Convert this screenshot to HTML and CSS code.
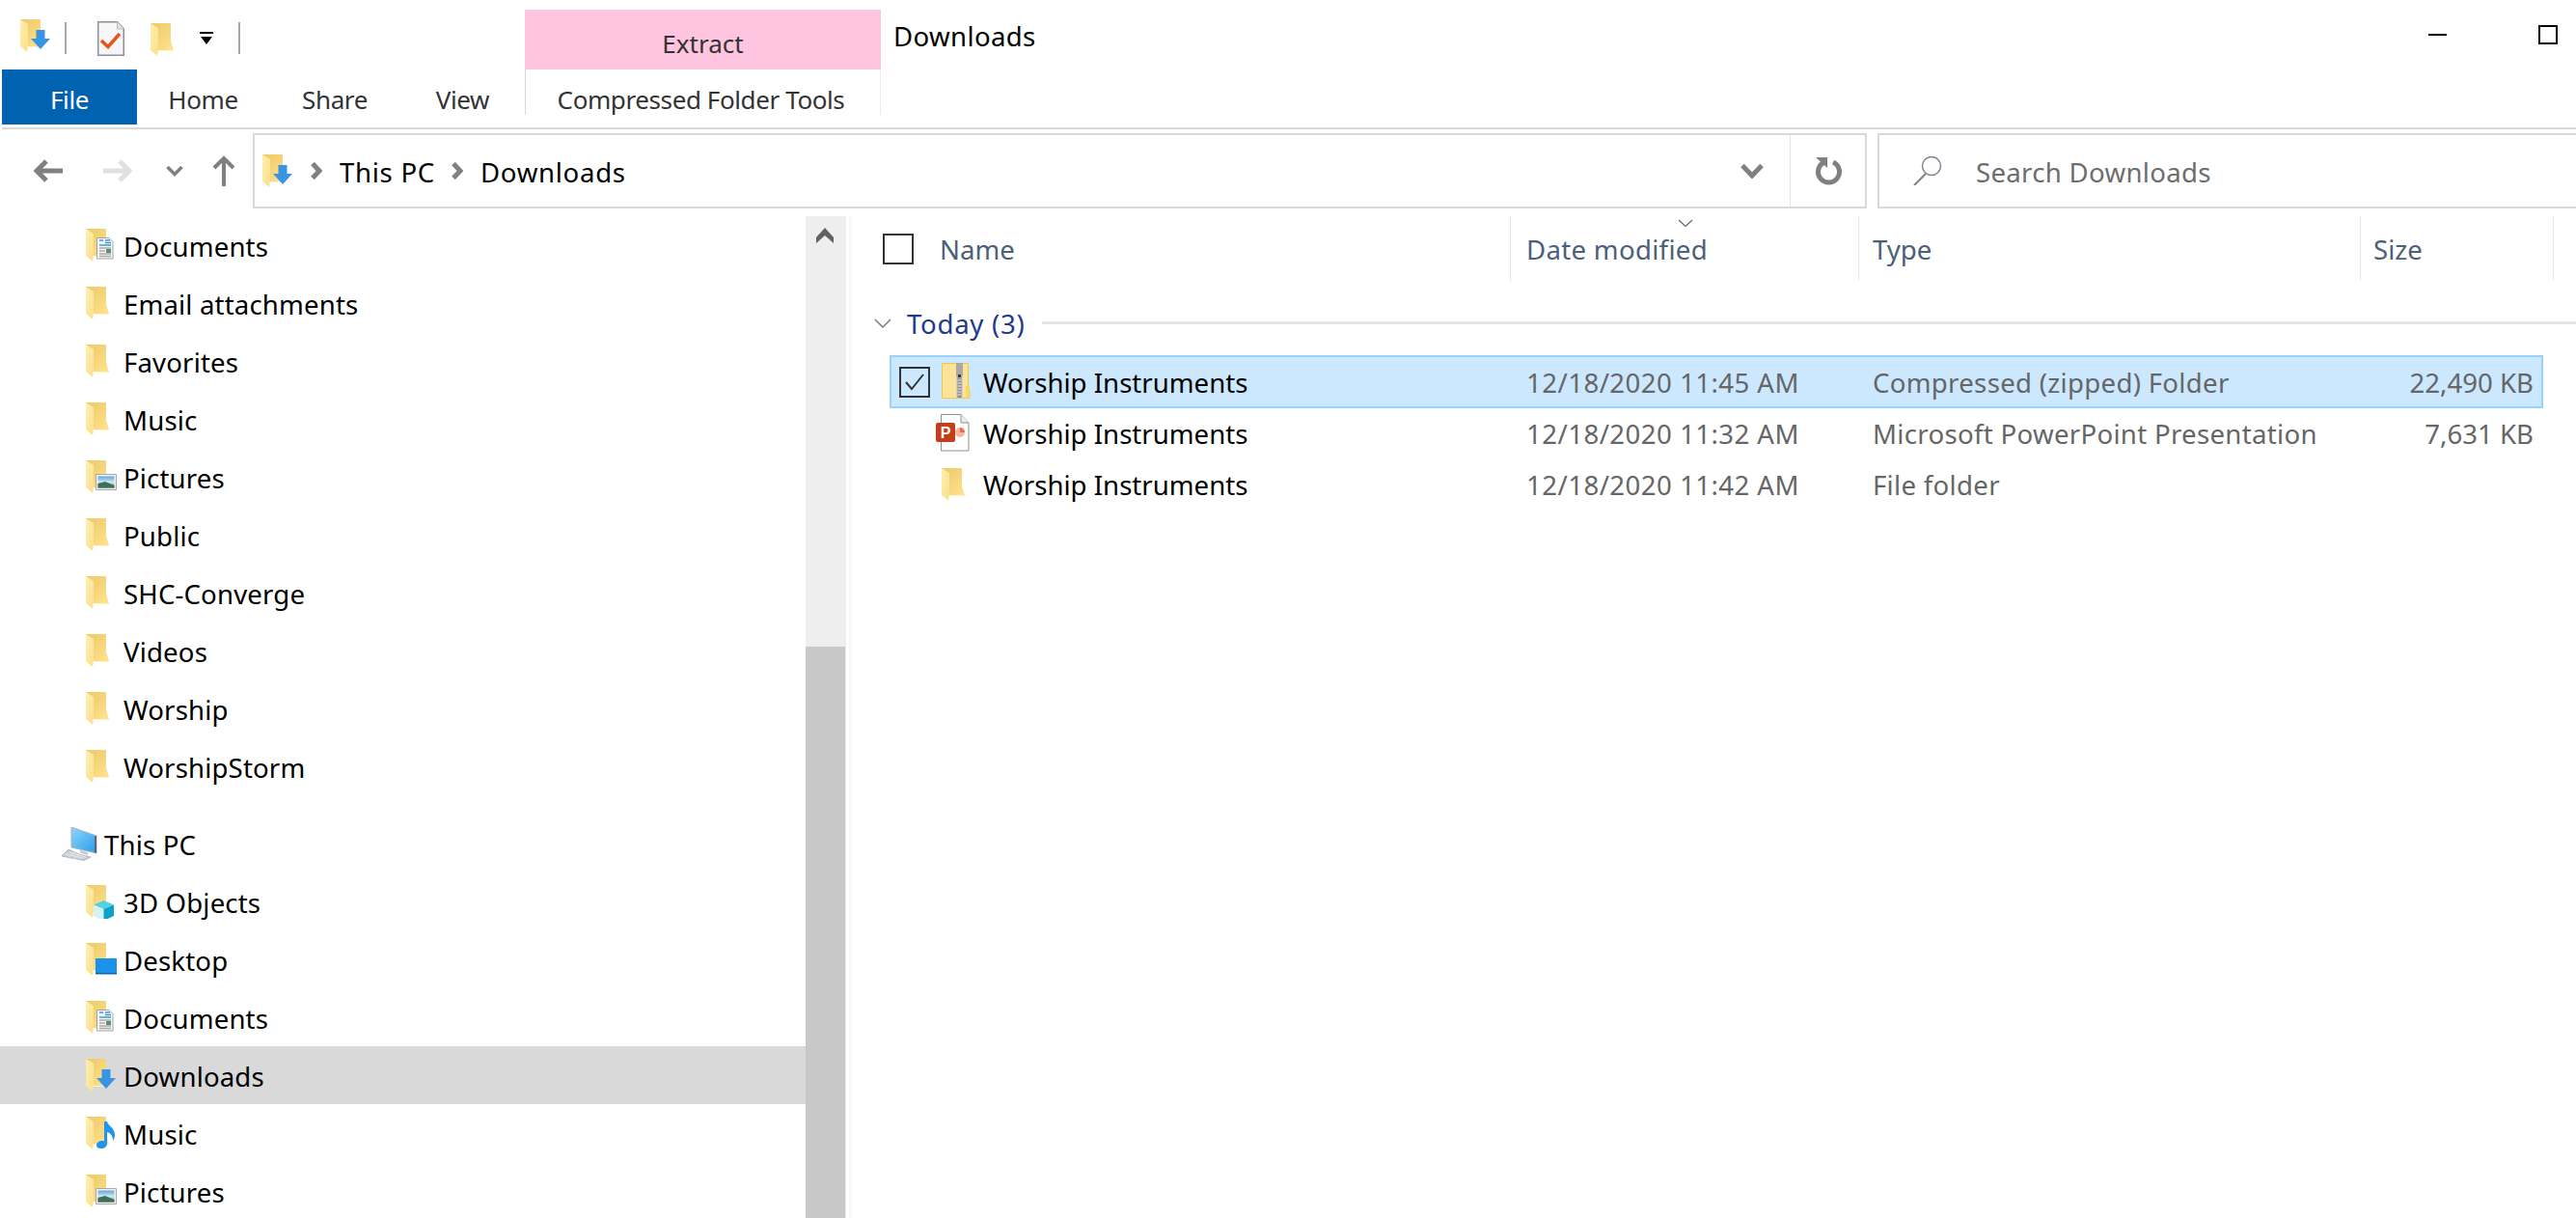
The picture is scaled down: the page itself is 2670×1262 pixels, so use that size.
FILE: index.html
```html
<!DOCTYPE html>
<html lang="en">
<head>
    <meta charset="UTF-8">
    <title>Downloads</title>
    <link rel="stylesheet" href="styles.css">
</head>
<body>
    <svg class="sprite" xmlns="http://www.w3.org/2000/svg">
        <defs>
            <linearGradient id="folderBack" x1="0" y1="0" x2="1" y2="1">
                <stop offset="0" stop-color="#edc866"/>
                <stop offset="1" stop-color="#ffe38f"/>
            </linearGradient>
            <linearGradient id="folderFlap" x1="0" y1="0" x2="1" y2="1">
                <stop offset="0" stop-color="#ffefae"/>
                <stop offset="1" stop-color="#fbdf8c"/>
            </linearGradient>
            <linearGradient id="screen" x1="0" y1="0" x2="1" y2="1">
                <stop offset="0" stop-color="#8fd6fb"/>
                <stop offset="1" stop-color="#2a9cea"/>
            </linearGradient>
            <linearGradient id="photo" x1="0" y1="0" x2="0" y2="1">
                <stop offset="0" stop-color="#5aa6e0"/>
                <stop offset="0.5" stop-color="#cfe6f2"/>
                <stop offset="1" stop-color="#5d8f72"/>
            </linearGradient>
            <g id="folderShape">
                <path d="M0 1H21V20L24 29H7Z" fill="url(#folderBack)"/>
                <path d="M0 1L8 6V29L7 35L0 29Z" fill="url(#folderFlap)"/>
                <path d="M7 29H24V30H7Z" fill="#fff3c9"/>
            </g>
        </defs>
        <symbol id="folder" viewBox="0 0 40 36">
            <use href="#folderShape"/>
        </symbol>
        <symbol id="folderDocs" viewBox="0 0 40 36">
            <use href="#folderShape"/>
            <path d="M11.5 10.5H24L28 14.5V32H11.5Z" fill="#f7f7f7" stroke="#a3a3a3"/>
            <path d="M14 13H18M20 13H25M20 15.5H26M14 18H26" stroke="#3b98dc" stroke-width="1.4"/>
            <path d="M14 21H26M14 24H20M14 27H26M14 29.5H26" stroke="#a9a9a9" stroke-width="1.4"/>
            <path d="M21 22H26V26H21Z" fill="#5d8f72"/>
        </symbol>
        <symbol id="folderPics" viewBox="0 0 40 36">
            <use href="#folderShape"/>
            <path d="M10.5 15.5H31.5V31.5H10.5Z" fill="#f2f2f2" stroke="#a8a8a8"/>
            <path d="M12.5 17.5H29.5V29.5H12.5Z" fill="url(#photo)"/>
            <path d="M12.5 25L20 23L29.5 27V29.5H12.5Z" fill="#3f6f58"/>
        </symbol>
        <symbol id="folderDown" viewBox="0 0 40 36">
            <use href="#folderShape"/>
            <path d="M16.500 12H25.500V21H31L21 32L11 21H16.500Z" fill="#3a94e4"/>
        </symbol>
        <symbol id="folder3d" viewBox="0 0 40 36">
            <use href="#folderShape"/>
            <path d="M18.500 17L29 21.500L18.500 26L8 21.500Z" fill="#55d2e2"/>
            <path d="M8 21.500L18.500 26V38L8 33Z" fill="#d4f3f3"/>
            <path d="M18.500 26L29 21.500V33L18.500 38Z" fill="#0ba3c8"/>
        </symbol>
        <symbol id="folderDesktop" viewBox="0 0 40 36">
            <use href="#folderShape"/>
            <path d="M10 17H32V33H10Z" fill="#1a92ea"/>
            <path d="M10 32H32V33.500H10Z" fill="#0b63b0"/>
        </symbol>
        <symbol id="folderMusic" viewBox="0 0 40 36">
            <use href="#folderShape"/>
            <path d="M19 6H22C23 11 30 12 30 20C30 23 29 25 28 26C28.500 22 26 18 22 17V29C22 32 19 34 15.500 34C12.500 34 11 32.500 11 30.500C11 28 14 26 17 26C17.500 26 18.500 26 19 26.500Z" fill="#1f96ee"/>
        </symbol>
        <symbol id="pc" viewBox="0 0 38 36">
            <path d="M11 0L37 9V27L11 21Z" fill="url(#screen)" stroke="#a8b3bb"/>
            <path d="M37 9V27L35 26.500V9.500Z" fill="#5a6670"/>
            <path d="M20 24L28 26V29L20 27Z" fill="#c5cbd0"/>
            <path d="M8 23L20 28.500L31 31L24 34.500L1 30Z" fill="#c9ced2" stroke="#a5acb2" stroke-width="0.800"/>
            <path d="M5 28L23 32M9 26L26 31M8 31L16 24.500M14 32.500L21 26.500" stroke="#eceef0" stroke-width="0.800"/>
        </symbol>
        <symbol id="zip" viewBox="0 0 40 40">
            <path d="M6.500 .5H33.500V22L35 29V36.500H6.500Z" fill="#fde397" stroke="#eec94f"/>
            <path d="M31 24H35V36H31Z" fill="#fcd568"/>
            <path d="M21 0H28V36H21Z" fill="#d4d0c4"/>
            <path d="M22.500 15H26.500V36H22.500Z" fill="#8c8c88"/>
            <path d="M23 18H26M23 21H26M23 24H26M23 27H26M23 30H26M23 33H26" stroke="#f1f1ee" stroke-width="1.200"/>
            <path d="M21 0H28V13L26 16H23L21 13Z" fill="#a9a9a5"/>
            <path d="M23 12H26V15H23Z" fill="#3b3b3b"/>
        </symbol>
    </svg>

    <div class="window">
        <header class="ribbon">
            <div class="title-row">
                <div class="qat">
                    <svg class="icon qat-folder"><use href="#folderDown"/></svg>
                    <span class="qat-sep qat-sep-first"></span>
                    <svg class="qat-doc" viewBox="0 0 28 36">
                        <path d="M.75 .75H20.500L27.250 8V35.250H.75Z" fill="#f5f6f7" stroke="#8f8f8f" stroke-width="1.500"/>
                        <path d="M20.500 .75V8H27.250" fill="#e4e4e4" stroke="#bbb"/>
                        <path d="M4 20L11 26.500L23 13" fill="none" stroke="#e8541c" stroke-width="3.500"/>
                    </svg>
                    <svg class="qat-folder-small"><use href="#folder"/></svg>
                    <svg class="qat-more" viewBox="0 0 14 14">
                        <path d="M0 1H14" stroke="#000" stroke-width="2"/>
                        <path d="M1 5H13L7 13Z" fill="#000"/>
                    </svg>
                    <span class="qat-sep"></span>
                </div>
                <div class="context-label">Extract</div>
                <div class="window-title">Downloads</div>
                <div class="window-buttons">
                    <span class="btn-min"></span>
                    <span class="btn-max"></span>
                </div>
            </div>
            <nav class="tab-row">
                <div class="tab tab-file">File</div>
                <div class="tab tab-home">Home</div>
                <div class="tab tab-share">Share</div>
                <div class="tab tab-view">View</div>
                <div class="tab tab-context">Compressed Folder Tools</div>
            </nav>
        </header>

        <div class="address-row">
            <svg class="nav-btn nav-back" viewBox="0 0 30 24"><path d="M30 12H4M13 2L3 12L13 22" fill="none" stroke="#808080" stroke-width="5"/></svg>
            <svg class="nav-btn nav-forward" viewBox="0 0 30 24"><path d="M0 12H26M17 2L27 12L17 22" fill="none" stroke="#e0e0e0" stroke-width="5"/></svg>
            <svg class="nav-btn nav-recent" viewBox="0 0 18 12"><path d="M1.500 2L9 9.500L16.500 2" fill="none" stroke="#808080" stroke-width="3.500"/></svg>
            <svg class="nav-btn nav-up" viewBox="0 0 24 32"><path d="M12 32V4M2 13L12 3L22 13" fill="none" stroke="#808080" stroke-width="4"/></svg>
            <div class="address-box">
                <svg class="icon"><use href="#folderDown"/></svg>
                <svg class="crumb-arrow" viewBox="0 0 12 18"><path d="M2 1.500L9 9L2 16.500" fill="none" stroke="#808080" stroke-width="5"/></svg>
                <span class="crumb">This PC</span>
                <svg class="crumb-arrow" viewBox="0 0 12 18"><path d="M2 1.500L9 9L2 16.500" fill="none" stroke="#808080" stroke-width="5"/></svg>
                <span class="crumb">Downloads</span>
                <svg class="address-drop" viewBox="0 0 24 16"><path d="M2 2.500L12 13L22 2.500" fill="none" stroke="#808080" stroke-width="5"/></svg>
                <div class="refresh">
                    <svg viewBox="0 0 30 30"><path d="M20 6A11 11 0 1 1 10 6.500" fill="none" stroke="#808080" stroke-width="5"/><path d="M2 1H14V12Z" fill="#808080"/></svg>
                </div>
            </div>
            <div class="search-box">
                <svg class="search-icon" viewBox="0 0 30 30"><circle cx="19" cy="10" r="9.500" fill="none" stroke="#7f8a94" stroke-width="1.500"/><path d="M13 18L1 30" stroke="#808080" stroke-width="2"/></svg>
                <span>Search Downloads</span>
            </div>
        </div>

        <div class="content">
            <aside class="nav-pane">
                <ul class="tree">
                    <li><svg class="icon"><use href="#folderDocs"/></svg>Documents</li>
                    <li><svg class="icon"><use href="#folder"/></svg>Email attachments</li>
                    <li><svg class="icon"><use href="#folder"/></svg>Favorites</li>
                    <li><svg class="icon"><use href="#folder"/></svg>Music</li>
                    <li><svg class="icon"><use href="#folderPics"/></svg>Pictures</li>
                    <li><svg class="icon"><use href="#folder"/></svg>Public</li>
                    <li><svg class="icon"><use href="#folder"/></svg>SHC-Converge</li>
                    <li><svg class="icon"><use href="#folder"/></svg>Videos</li>
                    <li><svg class="icon"><use href="#folder"/></svg>Worship</li>
                    <li><svg class="icon"><use href="#folder"/></svg>WorshipStorm</li>
                </ul>
                <ul class="tree tree-pc">
                    <li class="root"><svg class="icon-pc"><use href="#pc"/></svg>This PC</li>
                    <li><svg class="icon"><use href="#folder3d"/></svg>3D Objects</li>
                    <li><svg class="icon"><use href="#folderDesktop"/></svg>Desktop</li>
                    <li><svg class="icon"><use href="#folderDocs"/></svg>Documents</li>
                    <li class="current"><svg class="icon"><use href="#folderDown"/></svg>Downloads</li>
                    <li><svg class="icon"><use href="#folderMusic"/></svg>Music</li>
                    <li><svg class="icon"><use href="#folderPics"/></svg>Pictures</li>
                </ul>
            </aside>
            <div class="scrollbar">
                <svg class="scroll-up" viewBox="0 0 18 16"><path d="M0 16V10L9 0L18 10V16L9 8Z" fill="#606060"/></svg>
                <div class="scroll-thumb"></div>
            </div>

            <main class="files">
                <div class="file-head">
                    <div class="head-cell head-name"><span class="checkbox"></span>Name</div>
                    <div class="head-cell head-date">
                        <svg class="sort-mark" viewBox="0 0 16 8"><path d="M1 1L8 7.500L15 1" fill="none" stroke="#666" stroke-width="1.200"/></svg>
                        Date modified
                    </div>
                    <div class="head-cell head-type">Type</div>
                    <div class="head-cell head-size">Size</div>
                    <div class="head-cell"></div>
                </div>
                <div class="group">
                    <svg class="group-arrow" viewBox="0 0 18 10"><path d="M1 1L9 9L17 1" fill="none" stroke="#7a7a7a" stroke-width="1.500"/></svg>
                    <span class="group-name">Today (3)</span>
                    <span class="group-line"></span>
                </div>
                <div class="file selected">
                    <div class="file-name"><span class="checkbox checked"><svg viewBox="0 0 28 28"><path d="M5 14L11 21L23 6" fill="none" stroke="#333" stroke-width="2"/></svg></span><svg class="file-icon"><use href="#zip"/></svg>Worship Instruments</div>
                    <div class="file-date">12/18/2020 11:45 AM</div>
                    <div class="file-type">Compressed (zipped) Folder</div>
                    <div class="file-size">22,490 KB</div>
                </div>
                <div class="file">
                    <div class="file-name"><span class="checkbox blank"></span>
                        <svg class="file-icon" viewBox="0 0 40 40">
                            <path d="M5.500 .5H26L34 9V38H5.500Z" fill="#fff" stroke="#8f8f8f"/>
                            <path d="M26 .5V9H34" fill="#eee" stroke="#8f8f8f"/>
                            <circle cx="25" cy="19" r="5" fill="#f7b3a2"/>
                            <path d="M25 19V14A5 5 0 0 1 30 19Z" fill="#ed6c47"/>
                            <rect x="0" y="9" width="20" height="20" rx="2" fill="#c43e1c"/>
                            <text x="10" y="25" class="ppt-letter" text-anchor="middle">P</text>
                        </svg>Worship Instruments</div>
                    <div class="file-date">12/18/2020 11:32 AM</div>
                    <div class="file-type">Microsoft PowerPoint Presentation</div>
                    <div class="file-size">7,631 KB</div>
                </div>
                <div class="file">
                    <div class="file-name"><span class="checkbox blank"></span><svg class="file-icon folder-icon"><use href="#folder"/></svg>Worship Instruments</div>
                    <div class="file-date">12/18/2020 11:42 AM</div>
                    <div class="file-type">File folder</div>
                    <div class="file-size"></div>
                </div>
            </main>
        </div>
    </div>
</body>
</html>
```

FILE: styles.css
```css
* {
    box-sizing: border-box;
}

html,
body {
    margin: 0;
    height: 100%;
    overflow: hidden;
    background: #ffffff;
}

body {
    font-family: "Noto Sans", "Open Sans", sans-serif;
    font-size: 27.6px;
    color: #000000;
}

.sprite {
    display: block;
    width: 0;
    height: 0;
}

.ppt-letter {
    font-family: "Liberation Sans", sans-serif;
    font-size: 16px;
    font-weight: 700;
    fill: #ffffff;
}

.window {
    width: 2670px;
    height: 1262px;
    display: flex;
    flex-direction: column;
}

.icon {
    flex: none;
    width: 40px;
    height: 36px;
}

/* ribbon */
.ribbon {
    height: 134px;
    margin-left: 2px;
    border-bottom: 2px solid #d9d9d9;
}

.title-row {
    height: 72px;
    margin-left: -2px;
    display: flex;
    align-items: stretch;
}

.qat {
    width: 544px;
    padding-left: 21px;
    display: flex;
    align-items: flex-start;
}

.qat-folder {
    margin-top: 19px;
}

.qat-sep {
    width: 2px;
    height: 33px;
    margin-top: 23px;
    background: #a8a8a8;
}

.qat-sep-first {
    margin-left: 6px;
}

.qat-doc {
    width: 28px;
    height: 36px;
    margin: 22px 0 0 32px;
}

.qat-folder-small {
    width: 40px;
    height: 36px;
    margin: 23px 0 0 27px;
}

.qat-more {
    width: 14px;
    height: 14px;
    margin: 33px 0 0 11px;
}

.qat-more + .qat-sep {
    margin-left: 26px;
}

.context-label {
    width: 369px;
    margin-top: 10px;
    padding-top: 17px;
    background: #ffc4df;
    color: #333333;
    text-align: center;
    font-size: 26px;
    line-height: 36px;
}

.window-title {
    margin-left: 13px;
    padding-top: 17px;
    line-height: 40px;
    letter-spacing: 0.35px;
}

.window-buttons {
    margin-left: auto;
    padding-right: 19px;
    display: flex;
    align-items: flex-start;
}

.btn-min {
    width: 19px;
    height: 2px;
    margin-top: 35px;
    background: #000000;
}

.btn-max {
    width: 20px;
    height: 20px;
    margin: 26px 0 0 95px;
    border: 2px solid #000000;
}

.tab-row {
    height: 60px;
    display: flex;
    align-items: flex-start;
}

.tab {
    height: 57px;
    line-height: 62px;
    text-align: center;
    color: #333333;
    font-size: 26px;
    letter-spacing: -0.4px;
}

.tab-file {
    width: 140px;
    background: #0063b1;
    color: #ffffff;
}

.tab-home {
    width: 137px;
}

.tab-share {
    width: 136px;
}

.tab-view {
    width: 129px;
}

.tab-context {
    width: 369px;
    height: 47px;
    padding-right: 4px;
    border-left: 1px solid #d9d9d9;
    border-right: 1px solid #ececec;
    white-space: nowrap;
}

/* address bar */
.address-row {
    height: 90px;
    padding: 4px 0 8px 35px;
    display: flex;
    align-items: center;
}

.nav-btn {
    flex: none;
}

.nav-back,
.nav-forward {
    width: 30px;
    height: 24px;
}

.nav-forward {
    margin-left: 42px;
}

.nav-recent {
    width: 18px;
    height: 12px;
    margin-left: 35px;
}

.nav-up {
    width: 24px;
    height: 32px;
    margin-left: 30px;
}

.address-box {
    flex: none;
    width: 1673px;
    height: 78px;
    margin-left: 18px;
    padding-left: 8px;
    border: 2px solid #d9d9d9;
    display: flex;
    align-items: center;
}

.crumb-arrow {
    flex: none;
    width: 12px;
    height: 18px;
    margin-left: 10px;
}

.crumb {
    margin-left: 18px;
    padding-top: 1px;
    letter-spacing: 0.7px;
}

.crumb + .crumb-arrow {
    margin-left: 17px;
}

.address-drop {
    width: 24px;
    height: 16px;
    margin-left: auto;
    margin-right: 27px;
}

.refresh {
    width: 78px;
    height: 100%;
    border-left: 1px solid #e5e5e5;
    display: flex;
    align-items: center;
    justify-content: center;
}

.refresh svg {
    width: 30px;
    height: 30px;
}

.search-box {
    flex: 1;
    height: 78px;
    margin-left: 11px;
    margin-right: -2px;
    padding-left: 35px;
    border: 2px solid #d9d9d9;
    border-right: none;
    color: #6d6d6d;
    letter-spacing: 0.3px;
    display: flex;
    align-items: center;
}

.search-box span {
    padding-top: 2px;
}

.search-icon {
    flex: none;
    width: 30px;
    height: 30px;
    margin-right: 35px;
}

/* tree */
.content {
    flex: 1;
    display: flex;
    min-height: 0;
}

.nav-pane {
    width: 835px;
    flex: none;
    letter-spacing: 0.15px;
}

.tree {
    list-style: none;
    margin: 0;
    padding: 0;
}

.tree-pc {
    margin-top: 20px;
}

.tree li {
    height: 60px;
    padding-left: 89px;
    padding-top: 1px;
    display: flex;
    align-items: center;
}

.tree .icon {
    margin-right: -1px;
    margin-top: -1px;
}

.tree .root {
    padding-left: 63px;
}

.icon-pc {
    flex: none;
    width: 38px;
    height: 36px;
    margin-right: 7px;
}

.tree .current {
    background: #d9d9d9;
}

.scrollbar {
    flex: none;
    width: 42px;
    background: #eeeeee;
    display: flex;
    flex-direction: column;
    align-items: center;
}

.scroll-up {
    width: 18px;
    height: 16px;
    margin-top: 12px;
    margin-right: 2px;
}

.scroll-thumb {
    width: 41px;
    margin-top: 418px;
    margin-right: 1px;
    flex: 1;
    background: #c8c8c8;
}

/* file list */
.files {
    flex: 1;
    min-width: 0;
    margin-left: 3px;
    border-left: 3px solid #f7f7f7;
}

.file-head {
    height: 67px;
    display: grid;
    grid-template-columns: 682px 361px 520px 200px 1fr;
    color: #4c607a;
}

.head-cell {
    position: relative;
    padding-left: 16px;
    border-left: 1px solid #e5e5e5;
    display: flex;
    align-items: center;
}

.head-name {
    padding-left: 32px;
    border-left: none;
}

.head-name .checkbox {
    margin-right: 27px;
}

.head-date {
    letter-spacing: 0.3px;
}

.head-type {
    padding-left: 14px;
}

.head-size {
    padding-left: 13px;
}

.sort-mark {
    position: absolute;
    left: 173px;
    top: 3px;
    width: 16px;
    height: 8px;
}

.checkbox {
    flex: none;
    width: 32px;
    height: 32px;
    border: 2px solid #333333;
    display: block;
}

.checkbox svg {
    display: block;
    width: 28px;
    height: 28px;
}

.checkbox.blank {
    visibility: hidden;
}

.group {
    height: 78px;
    padding: 9px 0 0 23px;
    color: #1f3a8f;
    display: flex;
    align-items: center;
}

.group-arrow {
    flex: none;
    width: 18px;
    height: 10px;
    margin-right: 16px;
}

.group-name {
    letter-spacing: 0.7px;
}

.group-line {
    flex: 1;
    height: 3px;
    margin-left: 18px;
    background: #e5e5e5;
}

.file {
    height: 53px;
    margin: 0 35px 0 40px;
    padding-top: 1px;
    display: grid;
    grid-template-columns: 642px 361px 520px 189px;
    align-items: center;
    color: #666666;
}

.file.selected {
    background: #cce8ff;
    outline: 2px solid #99d1ff;
    outline-offset: -1px;
}

.file-name {
    padding-left: 9px;
    color: #000000;
    display: flex;
    align-items: center;
}

.file-icon {
    flex: none;
    width: 40px;
    height: 40px;
    margin: 0 9px 0 6px;
}

.folder-icon {
    margin: 0 3px 0 12px;
}

.file-date {
    padding-left: 17px;
    letter-spacing: 0.45px;
}

.file-type {
    padding-left: 15px;
    letter-spacing: 0.3px;
}

.file-size {
    padding-right: 9px;
    text-align: right;
}
```
